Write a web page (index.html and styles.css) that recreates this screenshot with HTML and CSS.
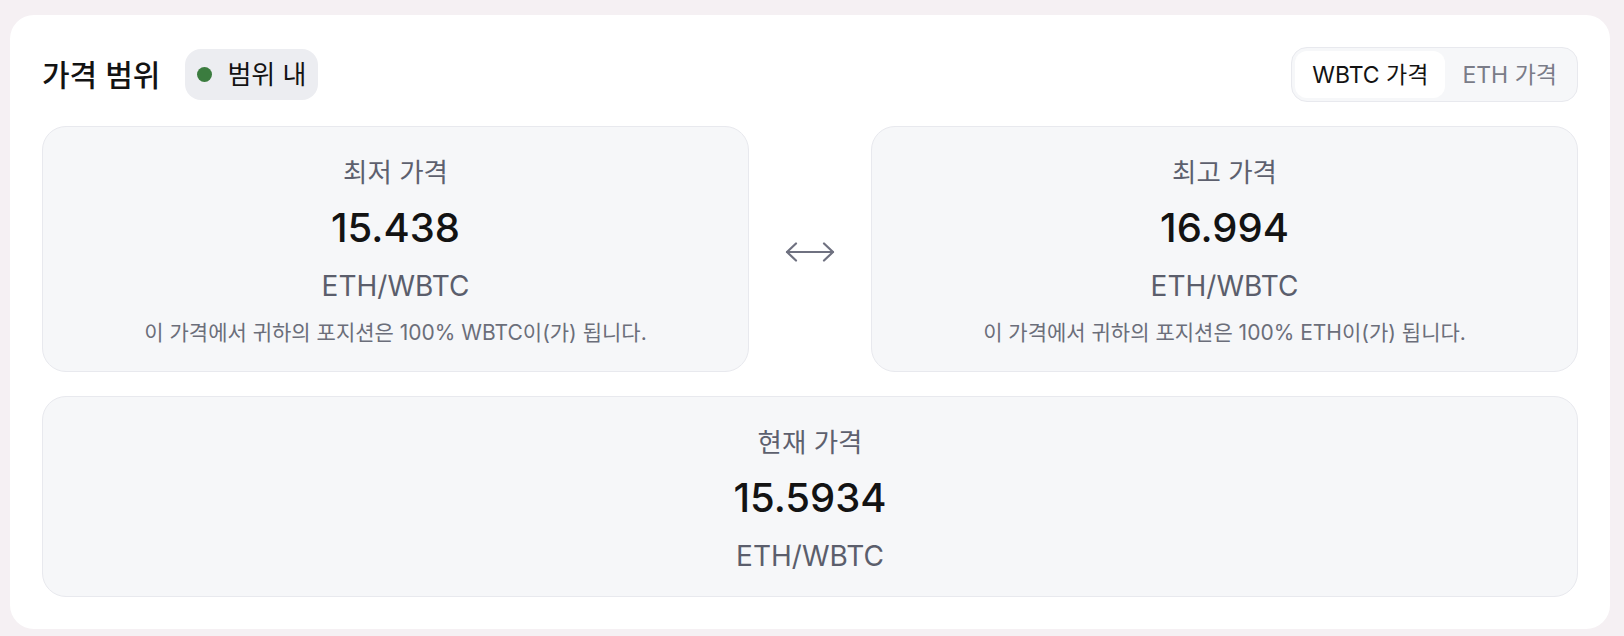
FILE: index.html
```html
<!DOCTYPE html>
<html lang="ko">
<head>
<meta charset="utf-8">
<link rel="stylesheet" href="styles.css">
</head>
<body>
<section class="panel">
  <header class="panel-header">
    <div class="title-group">
      <h2 class="title">가격 범위</h2>
      <span class="status-badge"><span class="status-dot"></span>범위 내</span>
    </div>
    <div class="toggle">
      <button class="toggle-tab is-active">WBTC 가격</button>
      <button class="toggle-tab">ETH 가격</button>
    </div>
  </header>
  <div class="range-row">
    <div class="price-card">
      <div class="price-label">최저 가격</div>
      <div class="price-value">15.438</div>
      <div class="price-unit">ETH/WBTC</div>
      <div class="price-note">이 가격에서 귀하의 포지션은 100% WBTC이(가) 됩니다.</div>
    </div>
    <div class="range-arrow">
      <svg width="50" height="20" viewBox="0 0 50 20" fill="none" stroke="#6f7180" stroke-width="2.2" stroke-linecap="round" stroke-linejoin="round">
        <path d="M2 10H48"/>
        <path d="M11 1.5L2 10L11 18.5"/>
        <path d="M39 1.5L48 10L39 18.5"/>
      </svg>
    </div>
    <div class="price-card">
      <div class="price-label">최고 가격</div>
      <div class="price-value">16.994</div>
      <div class="price-unit">ETH/WBTC</div>
      <div class="price-note">이 가격에서 귀하의 포지션은 100% ETH이(가) 됩니다.</div>
    </div>
  </div>
  <div class="price-card price-card--current">
    <div class="price-label">현재 가격</div>
    <div class="price-value">15.5934</div>
    <div class="price-unit">ETH/WBTC</div>
  </div>
</section>
</body>
</html>
```

FILE: styles.css
```css
* {
  box-sizing: border-box;
}

html, body {
  margin: 0;
  background: #f5f0f3;
}

body {
  padding: 15px 0 0 10px;
  font-family: "Inter", "Noto Sans CJK KR", sans-serif;
  color: #131313;
}

.panel {
  width: 1600px;
  background: #ffffff;
  border-radius: 24px;
  padding: 32px;
  display: flex;
  flex-direction: column;
  gap: 24px;
}

.panel-header {
  display: flex;
  align-items: center;
  justify-content: space-between;
  height: 55px;
}

.title-group {
  display: flex;
  align-items: center;
  gap: 25px;
}

.title {
  margin: 0;
  font-size: 30px;
  font-weight: 500;
  line-height: 36px;
}

.status-badge {
  display: flex;
  align-items: center;
  gap: 15px;
  height: 51px;
  padding: 0 12px;
  background: #ecedf1;
  border-radius: 16px;
  font-size: 26px;
  line-height: 31px;
  color: #131313;
}

.status-dot {
  width: 15px;
  height: 15px;
  border-radius: 50%;
  background: #3b7c3f;
}

.toggle {
  display: flex;
  height: 55px;
  padding: 3px;
  border: 1px solid #e8e9ee;
  border-radius: 16px;
  background: #f6f7f9;
}

.toggle-tab {
  border: none;
  background: transparent;
  font-family: inherit;
  font-size: 23px;
  line-height: 28px;
  padding: 0 17px;
  border-radius: 12px;
  color: #7a7c88;
  cursor: pointer;
}

.toggle-tab.is-active {
  background: #ffffff;
  color: #131313;
}

.range-row {
  display: flex;
  align-items: stretch;
}

.range-row .price-card {
  flex: 1;
}

.range-arrow {
  width: 122px;
  flex: none;
  display: flex;
  align-items: center;
  justify-content: center;
  padding-top: 5px;
}

.range-arrow svg {
  display: block;
}

.price-card {
  display: flex;
  flex-direction: column;
  align-items: center;
  gap: 16px;
  padding: 29px 16px 24px;
  background: #f6f7f9;
  border: 1px solid #e8e9ee;
  border-radius: 24px;
  text-align: center;
}

.price-card--current {
  padding-bottom: 22px;
}

.price-label {
  font-size: 26.5px;
  line-height: 32px;
  color: #5d606e;
}

.price-value {
  font-size: 40px;
  line-height: 48px;
  font-weight: 450;
  color: #131313;
}

.price-unit {
  font-size: 28px;
  line-height: 36px;
  color: #5b5e6c;
}

.price-note {
  font-size: 21px;
  line-height: 28px;
  color: #6b6e7a;
  margin-top: -1px;
}
```
